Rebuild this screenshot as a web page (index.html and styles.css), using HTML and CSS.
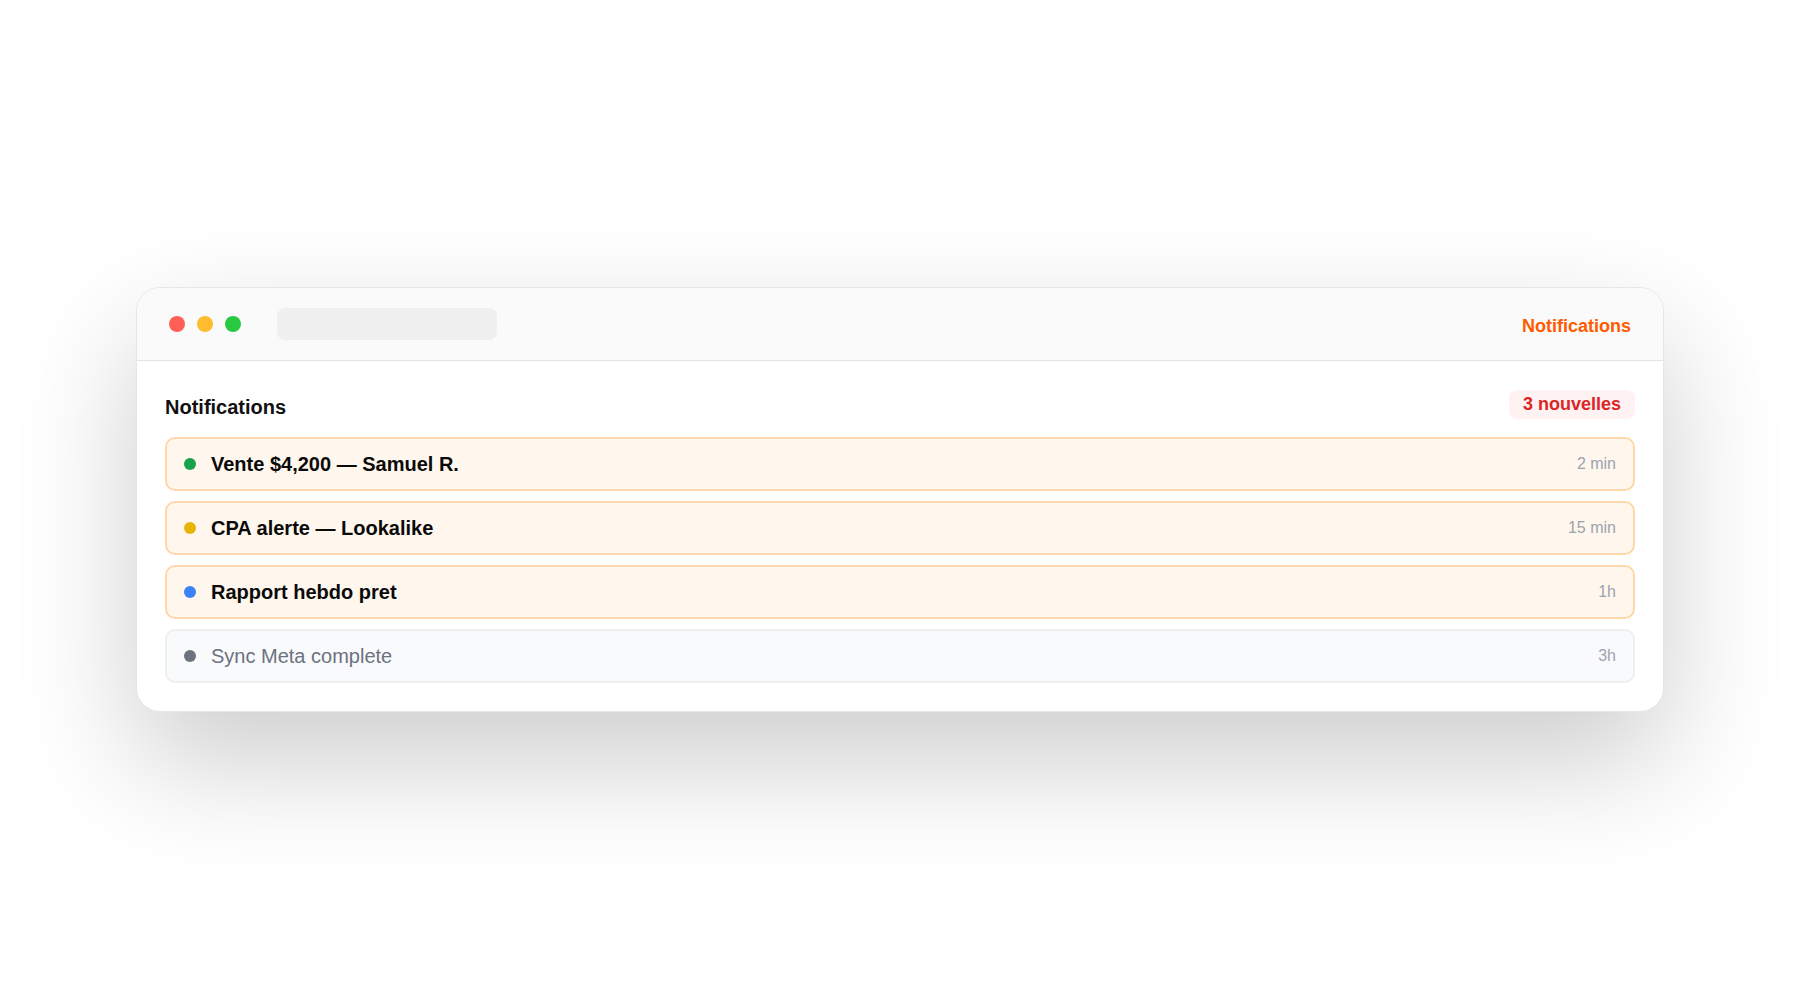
FILE: index.html
```html
<!DOCTYPE html>
<html lang="fr">
<head>
<meta charset="utf-8">
<title>Notifications</title>
<link rel="stylesheet" href="styles.css">
</head>
<body>
<main class="stage">
  <section class="window">
    <header class="titlebar">
      <div class="lights">
        <span class="light light-red"></span>
        <span class="light light-yellow"></span>
        <span class="light light-green"></span>
      </div>
      <div class="address"></div>
      <div class="titlebar-title">Notifications</div>
    </header>
    <div class="content">
      <div class="panel-head">
        <h1 class="panel-title">Notifications</h1>
        <span class="badge">3 nouvelles</span>
      </div>
      <ul class="list">
        <li class="item item-unread">
          <span class="dot dot-green"></span>
          <span class="item-text">Vente $4,200 — Samuel R.</span>
          <span class="item-time">2 min</span>
        </li>
        <li class="item item-unread">
          <span class="dot dot-yellow"></span>
          <span class="item-text">CPA alerte — Lookalike</span>
          <span class="item-time">15 min</span>
        </li>
        <li class="item item-unread">
          <span class="dot dot-blue"></span>
          <span class="item-text">Rapport hebdo pret</span>
          <span class="item-time">1h</span>
        </li>
        <li class="item item-read">
          <span class="dot dot-gray"></span>
          <span class="item-text">Sync Meta complete</span>
          <span class="item-time">3h</span>
        </li>
      </ul>
    </div>
  </section>
</main>
</body>
</html>
```

FILE: styles.css
```css
* { box-sizing: border-box; }

html, body {
  margin: 0;
  padding: 0;
  background: #ffffff;
  font-family: "Liberation Sans", Arial, Helvetica, sans-serif;
}

.stage {
  width: 1800px;
  height: 1000px;
  padding-bottom: 1px;
  display: flex;
  align-items: center;
  justify-content: center;
}

.window {
  width: 1528px;
  background: #ffffff;
  border: 1px solid #e6e6e8;
  border-radius: 24px;
  overflow: hidden;
  box-shadow: 0 50px 120px rgba(0, 0, 0, 0.2);
}

.titlebar {
  height: 73px;
  background: #fafafa;
  border-bottom: 1px solid #e4e4e8;
  display: flex;
  align-items: center;
  padding: 0 32px;
}

.lights {
  display: flex;
  gap: 12px;
}

.light {
  width: 16px;
  height: 16px;
  border-radius: 50%;
}
.light-red { background: #ff5f57; }
.light-yellow { background: #febc2e; }
.light-green { background: #28c840; }

.address {
  width: 220px;
  height: 32px;
  margin-left: 36px;
  border-radius: 8px;
  background: #f0f0f0;
}

.titlebar-title {
  margin-left: auto;
  padding-top: 4px;
  font-size: 18px;
  font-weight: 700;
  color: #ff5b00;
}

.content {
  padding: 28px;
}

.panel-head {
  height: 30px;
  display: flex;
  align-items: flex-end;
  justify-content: space-between;
  margin-bottom: 18px;
}

.panel-title {
  margin: 0;
  font-size: 20px;
  font-weight: 700;
  color: #111111;
  line-height: 23px;
}

.badge {
  font-size: 18px;
  font-weight: 700;
  color: #dc2626;
  background: #fef2f2;
  border-radius: 8px;
  padding: 4px 14px;
  line-height: 21px;
}

.list {
  list-style: none;
  margin: 0;
  padding: 0;
  display: flex;
  flex-direction: column;
  gap: 10px;
}

.item {
  height: 54px;
  display: flex;
  align-items: center;
  padding: 0 17px 0 17px;
  border-radius: 10px;
  border: 2px solid #fed7aa;
  background: #fff7ed;
}

.item-read {
  border-color: #eeeff1;
  background: #f9fafb;
}

.dot {
  width: 12px;
  height: 12px;
  border-radius: 50%;
  flex: none;
}
.dot-green { background: #16a34a; }
.dot-yellow { background: #eab308; }
.dot-blue { background: #3b82f6; }
.dot-gray { background: #6b7280; }

.item-text {
  margin-left: 15px;
  font-size: 20px;
  font-weight: 700;
  color: #0a0a0a;
}

.item-read .item-text {
  font-weight: 400;
  color: #6b7280;
}

.item-time {
  margin-left: auto;
  font-size: 16px;
  color: #9ca3af;
}
```
